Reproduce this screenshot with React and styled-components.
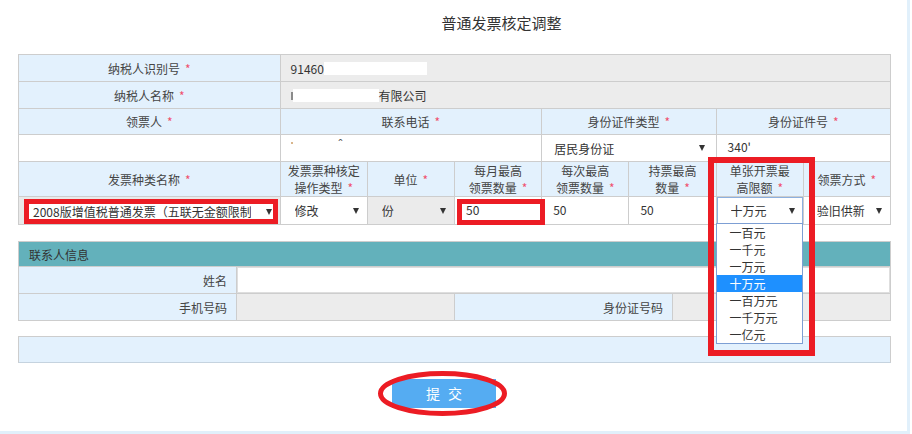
import React from "react";
import styled, { createGlobalStyle } from "styled-components";

const GlobalStyle = createGlobalStyle`
  html, body { margin: 0; padding: 0; background: #fff; }
  body {
    font-family: "Noto Sans CJK SC", "Microsoft YaHei", sans-serif;
    font-size: 12px;
    color: #333;
  }
  * { box-sizing: border-box; }
`;

const Page = styled.div`
  position: relative;
  width: 910px;
  height: 434px;
  padding: 0 16px 0 18px;
  border-right: 3px solid #e1f0fb;
  border-bottom: 3px solid #e1f0fb;
  overflow: hidden;
`;

const Title = styled.h1`
  margin: 0;
  height: 54px;
  padding: 13px 0 0 94px;
  font-size: 15px;
  font-weight: normal;
  line-height: 20px;
  text-align: center;
  color: #333;
`;

const Grid = styled.div`
  display: grid;
  grid-template-columns: repeat(${(p) => p.$cols}, minmax(0, 1fr));
  grid-template-rows: ${(p) => p.$rows};
  margin-top: ${(p) => p.$gap || 0}px;
  border-top: 1px solid #cdcdcd;
  border-left: 1px solid #cdcdcd;
`;

const Cell = styled.div`
  grid-column: span ${(p) => p.$span || 1};
  position: relative;
  min-width: 0;
  display: flex;
  align-items: center;
  border-right: 1px solid #cdcdcd;
  border-bottom: 1px solid #cdcdcd;
`;

const LabelCell = styled(Cell)`
  background: #e3f1fd;
  justify-content: ${(p) => (p.$right ? "flex-end" : "center")};
  padding: 0 ${(p) => (p.$right ? "9px" : "0")};
  color: #444;
`;

const LabelText = styled.span`
  display: block;
  text-align: center;
  line-height: 17px;
  white-space: nowrap;
`;

const ValueCell = styled(Cell)`
  background: #ececec;
  padding-left: 10px;
  color: #333;
  white-space: nowrap;
`;

const FieldCell = styled(Cell)`
  background: ${(p) => p.$bg || "#fff"};
  align-items: stretch;
  padding: ${(p) => p.$pad || "0"};
`;

const SectionHead = styled(Cell)`
  background: #63b1bb;
  padding-left: 10px;
  color: #333;
`;

const Req = styled.span`
  color: #f0506e;
  margin-left: 5px;
`;

const Redact = styled.span`
  display: inline-block;
  flex: none;
  width: ${(p) => p.$w}px;
  height: 13px;
  background: #fff;
`;

const Speck = styled.span`
  display: inline-block;
  flex: none;
  width: ${(p) => p.$w}px;
  height: ${(p) => p.$h}px;
  margin-left: ${(p) => p.$ml || 0}px;
  margin-top: ${(p) => p.$mt || 0}px;
  background: ${(p) => p.$c};
`;

const Hat = styled.span`
  margin-left: 46px;
  margin-top: -6px;
  color: #555;
  font-size: 12px;
`;

const TextBox = styled.div`
  flex: 1;
  display: flex;
  align-items: center;
  padding: 0 0 3px ${(p) => p.$pl || 10}px;
  background: #fff;
  color: #333;
  border: ${(p) => (p.$border ? "1px solid #dedede" : "none")};
`;

const Select = styled.div`
  flex: 1;
  min-width: 0;
  display: flex;
  align-items: center;
  padding: 0 ${(p) => p.$pr ?? 7}px 0 ${(p) => p.$pl ?? 13}px;
  background: ${(p) => (p.$disabled ? "#ebebeb" : "#fff")};
  border: 1px solid ${(p) => (p.$focused ? "#8db0df" : "transparent")};
  color: #333;
  white-space: nowrap;
`;

const SelectText = styled.span`
  flex: 1;
  min-width: 0;
  overflow: hidden;
  margin-right: ${(p) => p.$gap || 4}px;
`;

const Caret = styled.span`
  flex: none;
  width: 0;
  height: 0;
  border-left: 3px solid transparent;
  border-right: 3px solid transparent;
  border-top: 6px solid #333;
`;

const OptionList = styled.ul`
  position: absolute;
  left: -1px;
  top: calc(100% - 1px);
  width: 87px;
  margin: 0;
  padding: 0;
  list-style: none;
  background: #fff;
  border: 1px solid #7d9fd4;
  z-index: 1;
`;

const Option = styled.li`
  height: 17px;
  line-height: 17px;
  padding-left: 13px;
  background: ${(p) => (p.$active ? "#1e90ff" : "#fff")};
  color: ${(p) => (p.$active ? "#fff" : "#333")};
`;

const Bar = styled.div`
  margin-top: 15px;
  height: 27px;
  background: #e3f1fd;
  border: 1px solid #cdcdcd;
  border-bottom-color: #c5d3df;
`;

const ButtonRow = styled.div`
  margin-top: 16px;
  display: flex;
  justify-content: center;
  padding-right: 21px;
`;

const ButtonWrap = styled.div`
  position: relative;
`;

const SubmitButton = styled.button`
  display: block;
  width: 104px;
  height: 29px;
  padding: 0 0 0 8px;
  border: none;
  background: #55acf2;
  color: #fff;
  font-family: "Noto Sans CJK SC", sans-serif;
  font-size: 14px;
  letter-spacing: 8px;
  line-height: 29px;
  cursor: pointer;
`;

const Ring = styled.svg`
  position: absolute;
  left: -14px;
  top: -8px;
  width: 129px;
  height: 45px;
  overflow: visible;
  pointer-events: none;
`;

const Mark = styled.div`
  position: absolute;
  left: ${(p) => p.$x}px;
  top: ${(p) => p.$y}px;
  width: ${(p) => p.$w}px;
  height: ${(p) => p.$h}px;
  border: ${(p) => p.$t}px solid #ec1c24;
  pointer-events: none;
  z-index: 2;
`;

const Label = ({ span, right, req, children }) => (
  <LabelCell $span={span} $right={right}>
    <LabelText>
      {children}
      {req && <Req>*</Req>}
    </LabelText>
  </LabelCell>
);

const amounts = ["一百元", "一千元", "一万元", "十万元", "一百万元", "一千万元", "一亿元"];

export default function App() {
  return (
    <>
      <GlobalStyle />
      <Page>
        <Title>普通发票核定调整</Title>

        <Grid $cols={10} $rows="27px 27px 26px 27px 35px 28px">
          <Label span={3} req>纳税人识别号</Label>
          <ValueCell $span={7}>91460<Redact $w={103} /></ValueCell>

          <Label span={3} req>纳税人名称</Label>
          <ValueCell $span={7}>
            <Speck $w={2} $h={8} $c="#8a8a8a" $mt={2} />
            <Redact $w={86} />
            有限公司
          </ValueCell>

          <Label span={3} req>领票人</Label>
          <Label span={3} req>联系电话</Label>
          <Label span={2} req>身份证件类型</Label>
          <Label span={2} req>身份证件号</Label>

          <FieldCell $span={3}><TextBox /></FieldCell>
          <FieldCell $span={3}>
            <TextBox>
              <Speck $w={2} $h={2} $c="#d9b68c" $mt={-8} />
              <Hat>ˆ</Hat>
            </TextBox>
          </FieldCell>
          <FieldCell $span={2}>
            <Select $pl={11} $pr={10}>
              <SelectText>居民身份证</SelectText>
              <Caret />
            </Select>
          </FieldCell>
          <FieldCell $span={2}><TextBox $pl={11}>340'</TextBox></FieldCell>

          <Label span={3} req>发票种类名称</Label>
          <Label req>发票票种核定<br />操作类型</Label>
          <Label req>单位</Label>
          <Label req>每月最高<br />领票数量</Label>
          <Label req>每次最高<br />领票数量</Label>
          <Label req>持票最高<br />数量</Label>
          <Label req>单张开票最<br />高限额</Label>
          <Label req>领票方式</Label>

          <FieldCell $span={3} $bg="#e9e9e9" $pad="2px 2px 0 5px">
            <Select $pl={8} $pr={5}>
              <SelectText $gap={15}>2008版增值税普通发票（五联无金额限制</SelectText>
              <Caret />
            </Select>
          </FieldCell>
          <FieldCell $bg="#e9e9e9">
            <Select><SelectText>修改</SelectText><Caret /></Select>
          </FieldCell>
          <FieldCell $bg="#e9e9e9">
            <Select $disabled><SelectText>份</SelectText><Caret /></Select>
          </FieldCell>
          <FieldCell $bg="#e9e9e9"><TextBox $pl={11}>50</TextBox></FieldCell>
          <FieldCell $bg="#e9e9e9"><TextBox $pl={11}>50</TextBox></FieldCell>
          <FieldCell $bg="#e9e9e9"><TextBox $pl={11}>50</TextBox></FieldCell>
          <FieldCell $bg="#e9e9e9">
            <Select $focused $pl={13}>
              <SelectText>十万元</SelectText>
              <Caret />
            </Select>
            <OptionList>
              {amounts.map((a) => (
                <Option key={a} $active={a === "十万元"}>{a}</Option>
              ))}
            </OptionList>
          </FieldCell>
          <FieldCell $bg="#e9e9e9">
            <Select $pl={12}><SelectText>验旧供新</SelectText><Caret /></Select>
          </FieldCell>
        </Grid>

        <Grid $cols={4} $rows="25px 27px 27px" $gap={16}>
          <SectionHead $span={4}>联系人信息</SectionHead>
          <Label right>姓名</Label>
          <FieldCell $span={3}><TextBox $border /></FieldCell>
          <Label right>手机号码</Label>
          <ValueCell />
          <Label right>身份证号码</Label>
          <ValueCell />
        </Grid>

        <Bar />

        <ButtonRow>
          <ButtonWrap>
            <SubmitButton type="button">提交</SubmitButton>
            <Ring viewBox="0 0 129 45">
              <ellipse cx="64.5" cy="22.5" rx="62" ry="20" fill="none" stroke="#ec1c24" strokeWidth="5" />
            </Ring>
          </ButtonWrap>
        </ButtonRow>

        <Mark $x={24} $y={199} $w={254} $h={25} $t={5} />
        <Mark $x={457} $y={199} $w={88} $h={26} $t={5} />
        <Mark $x={708} $y={157} $w={107} $h={199} $t={6} />
      </Page>
    </>
  );
}
